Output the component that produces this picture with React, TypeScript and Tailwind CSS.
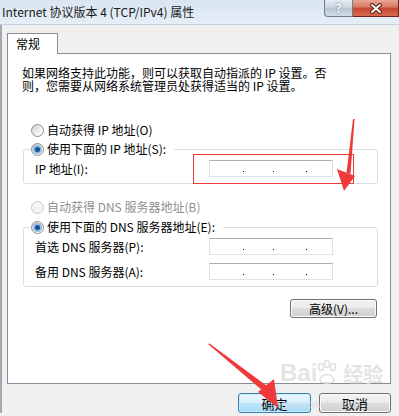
import React from 'react';

const FONT = "font-['Noto_Sans_CJK_SC',sans-serif]";

const Radio: React.FC<{ checked?: boolean; disabled?: boolean }> = ({ checked, disabled }) => (
  <span
    className={`inline-flex h-[13px] w-[13px] shrink-0 items-center justify-center rounded-full border ${
      disabled
        ? 'border-[#c9c9c9] bg-[#f4f4f4]'
        : 'border-[#8e8f8f] bg-[linear-gradient(135deg,#d0d0d0,#f6f6f6_70%,#ffffff)]'
    }`}
  >
    {checked && <span className="h-[5px] w-[5px] rounded-full bg-[#1b4f91] shadow-[0_0_0_2px_#8db9e6]" />}
  </span>
);

const IpBox: React.FC = () => (
  <div className="flex h-[17px] w-[124px] items-end border border-[#dde3ea] border-t-[#abadb3] bg-white pb-[4px]">
    <span className="w-[33px]" />
    <span className="h-[1px] w-[1px] bg-black" />
    <span className="w-[29px]" />
    <span className="h-[1px] w-[1px] bg-black" />
    <span className="w-[32px]" />
    <span className="h-[1px] w-[1px] bg-black" />
  </div>
);

const WinButton: React.FC<{ primary?: boolean; className?: string; children: React.ReactNode }> = ({
  primary,
  className = '',
  children,
}) => (
  <div
    className={`flex items-center justify-center rounded-[3px] border text-[12px] leading-none text-black ${
      primary
        ? 'border-[#3c7fb1] bg-[linear-gradient(#eaf6fd,#d9f0fc_50%,#bee6fd_50%,#a7d9f5)] shadow-[inset_0_0_0_1px_#c8ecfc]'
        : 'border-[#707070] bg-[linear-gradient(#f2f2f2,#ebebeb_50%,#dddddd_50%,#cfcfcf)] shadow-[inset_0_0_0_1px_#fbfbfb]'
    } ${className}`}
  >
    {children}
  </div>
);

export default function App() {
  return (
    <div className={`relative h-[416px] w-[399px] overflow-hidden bg-[#f0f0f0] ${FONT}`}>
      {/* title bar */}
      <div className="flex h-[25px] items-start border-b border-[#c3d0de] bg-[linear-gradient(#d9e5f2,#e6eef7)]">
        <span className="pl-[2px] pt-[5px] text-[12px] leading-[14px] text-[#1a1a1a]">
          Internet 协议版本 4 (TCP/IPv4) 属性
        </span>
        <div className="ml-auto flex">
          <div className="flex h-[17px] w-[29px] items-center justify-center rounded-bl-[4px] border border-t-0 border-[#6e7d8f] bg-[linear-gradient(#e4ebf3,#cdd7e2_45%,#b8c5d5_50%,#d2dce7)] text-[12px] font-bold leading-none text-white [text-shadow:0_0_2px_#4a5668]">
            ?
          </div>
          <div className="flex h-[17px] w-[46px] items-center justify-center border border-t-0 border-l-0 border-[#6b2418] bg-[linear-gradient(#e9a896,#d77a63_45%,#c7472f_50%,#d66a52)]">
            <svg width="14" height="11" viewBox="0 0 14 11">
              <path d="M3 2 L11 9 M11 2 L3 9" stroke="#5a1e12" strokeWidth="4" strokeLinecap="round" />
              <path d="M3 2 L11 9 M11 2 L3 9" stroke="#ffffff" strokeWidth="2" strokeLinecap="round" />
            </svg>
          </div>
        </div>
      </div>

      {/* body */}
      <div className="flex flex-col border-l-[2px] border-[#a3a9b1] pl-[5px] pr-[8px] pt-[8px]">
        <div className="relative z-10 -mb-[1px] h-[21px] w-[51px] border border-b-0 border-[#898c95] bg-white pl-[8px] text-[12px] leading-[20px] text-black">
          常规
        </div>
        <div className="flex h-[331px] flex-col border border-[#898c95] bg-white text-[12px] text-black">
          <p className="ml-[14px] mt-[12px] leading-[13px]">
            如果网络支持此功能，则可以获取自动指派的 IP 设置。否
            <br />
            则，您需要从网络系统管理员处获得适当的 IP 设置。
          </p>

          <div className="ml-[23px] mt-[30px] flex h-[16px] items-center gap-[3px]">
            <Radio />
            <span className="leading-[16px]">自动获得 IP 地址(O)</span>
          </div>

          <fieldset className="ml-[15px] mr-[12px] mt-[3px] rounded-[3px] border border-[#d5dfe5] px-[11px] pb-[6px] pt-[3px]">
            <legend className="-ml-[4px] flex h-[16px] items-center gap-[3px] pr-[8px]">
              <Radio checked />
              <span className="leading-[16px]">使用下面的 IP 地址(S):</span>
            </legend>
            <div className="flex h-[17px] items-center">
              <span className="w-[174px] leading-[16px]">IP 地址(I):</span>
              <IpBox />
            </div>
          </fieldset>

          <div className="ml-[23px] mt-[15px] flex h-[16px] items-center gap-[3px]">
            <Radio disabled />
            <span className="leading-[16px] text-[#8f8f8f]">自动获得 DNS 服务器地址(B)</span>
          </div>

          <fieldset className="ml-[15px] mr-[12px] mt-[4px] rounded-[3px] border border-[#d5dfe5] px-[11px] pb-[6px] pt-[3px]">
            <legend className="-ml-[4px] flex h-[16px] items-center gap-[3px] pr-[8px]">
              <Radio checked />
              <span className="leading-[16px]">使用下面的 DNS 服务器地址(E):</span>
            </legend>
            <div className="flex flex-col gap-[8px]">
              <div className="flex h-[17px] items-center">
                <span className="w-[174px] leading-[16px]">首选 DNS 服务器(P):</span>
                <IpBox />
              </div>
              <div className="flex h-[17px] items-center">
                <span className="w-[174px] leading-[16px]">备用 DNS 服务器(A):</span>
                <IpBox />
              </div>
            </div>
          </fieldset>

          <WinButton className="mr-[13px] mt-[12px] h-[19px] w-[87px] self-end">高级(V)...</WinButton>
        </div>

        <div className="mt-[9px] flex justify-end gap-[8px]">
          <WinButton primary className="h-[20px] w-[73px] text-[13px]">
            确定
          </WinButton>
          <WinButton className="h-[20px] w-[72px] text-[13px]">取消</WinButton>
        </div>
      </div>

      {/* annotation: red box */}
      <div className="absolute left-[193px] top-[154px] h-[30px] w-[161px] border border-[#ee3b3b]" />

      {/* watermark */}
      <div className="pointer-events-none absolute left-[280px] top-[360px] flex items-end gap-[2px] text-[#e4e4e4]">
        <span className="font-['Liberation_Sans',sans-serif] text-[24px] font-bold leading-[26px]">Bai</span>
        <svg width="26" height="26" viewBox="0 0 26 26" className="-ml-[4px]">
          <g fill="none" stroke="#e0e0e0" strokeWidth="1.5">
            <ellipse cx="6" cy="7" rx="2.5" ry="3.5" />
            <ellipse cx="12" cy="4" rx="2.5" ry="3.5" />
            <ellipse cx="18" cy="7" rx="2.5" ry="3.5" />
            <path d="M5 20 C5 13 19 13 19 20 C19 24 5 24 5 20 Z" />
          </g>
        </svg>
        <span className="text-[20px] font-bold leading-[24px]">经验</span>
      </div>
      <div className="pointer-events-none absolute left-[270px] top-[396px] font-['Liberation_Sans',sans-serif] text-[11px] text-[#d4dbe2]/70">
        jingyan.baidu.com
      </div>

      {/* annotation: red arrows */}
      <svg className="pointer-events-none absolute inset-0" width="399" height="416" viewBox="0 0 399 416">
        <g fill="#f03a3a">
          <polygon points="353,119 354.6,119 350.5,174 346.5,173" />
          <polygon points="337,169 355,176 344,191" />
          <polygon points="208,344 209.5,343.5 267,386 263,391" />
          <polygon points="258,392 274,379 278,408" />
        </g>
      </svg>
    </div>
  );
}
